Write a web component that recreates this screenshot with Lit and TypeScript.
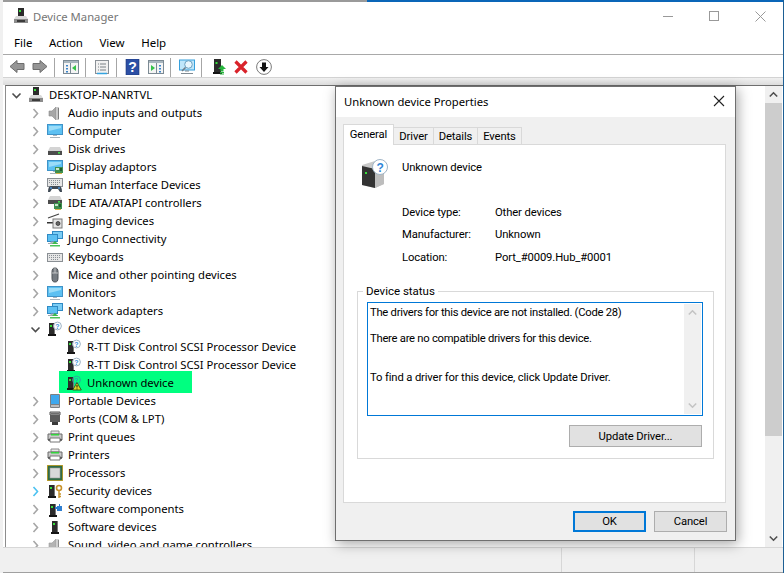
import { LitElement, html, css, svg } from "lit";
import { customElement } from "lit/decorators.js";

const tower = (x = 0, y = 0) => svg`<g transform="translate(${x} ${y})">
  <path d="M1 1h6v11H1z" fill="#2b2b2b"/><path d="M6 1h1v11H6z" fill="#777"/>
  <rect x="2" y="3" width="2" height="2" fill="#35e03a"/>
  <path d="M0 12h8v2H0z" fill="#151515"/></g>`;
const question = (x: number, y: number) => svg`<g>
  <circle cx=${x} cy=${y} r="3.9" fill="#fff" stroke="#9fb4c6" stroke-width="1"/>
  <text x=${x} y=${y + 2.6} font-size="7" font-weight="700" text-anchor="middle" fill="#3a8fdc" font-family="Liberation Sans">?</text></g>`;
const monitor = (x = 0, y = 0) => svg`<g transform="translate(${x} ${y})">
  <rect x=".5" y="1.5" width="15" height="10" fill="#5cc0f2" stroke="#3f93c8"/>
  <path d="M2 3h12v2L2 8z" fill="#9adcf8"/>
  <path d="M6 12h4v1H6zM3 14h10v1H3z" fill="#a9b4bc"/></g>`;
const board = (x: number, y: number) => svg`<g transform="translate(${x} ${y})">
  <rect width="8" height="6" fill="#3f8f4f"/><rect x="1" y="1" width="3" height="2" fill="#c8e6c9"/>
  <rect x="5" y="1" width="2" height="3" fill="#1e5c2c"/><path d="M1 6h6v1H1z" fill="#d6b24a"/></g>`;
const disk = (y = 6) => svg`<g transform="translate(1 ${y})">
  <path d="M2 0h10l2 4H0z" fill="#d4d4d4"/><path d="M0 4h14v4H0z" fill="#4c4c4c"/>
  <rect x="10" y="5" width="2" height="1.6" fill="#3fe04a"/></g>`;
const keyboard = (y = 4) => svg`<g transform="translate(0 ${y})">
  <rect x=".5" y=".5" width="15" height="8" fill="#e6e6e6" stroke="#8a8f94"/>
  <path d="M2 2.5h12M2 4.5h12M4 6.5h8" stroke="#8a9096" stroke-width="1" stroke-dasharray="1 1"/></g>`;
const printer = () => svg`
  <path d="M4 2h8v3H4z" fill="#e8e8e8" stroke="#8a8a8a"/>
  <path d="M1 5h14v6H1z" fill="#c9c9c9" stroke="#6b6b6b"/>
  <path d="M4 5h8v1.500H4z" fill="#33d43c"/>
  <path d="M3 9h10v4H3z" fill="#fff" stroke="#777"/>
  <path d="M1 11h2M13 11h2" stroke="#333"/>`;
const speaker = (op = 1) => svg`<g opacity=${op}>
  <path d="M2 6h3l4-4v13l-4-4H2z" fill="#a6a6a6" stroke="#8b8b8b" stroke-width=".6"/>
  <path d="M9 2h3v13H9z" fill="#c8c8c8"/><path d="M11 3h1v11h-1z" fill="#7c7c7c"/></g>`;
const network = () => svg`
  <rect x="5.500" y=".5" width="10" height="7" fill="#7bcdf5" stroke="#2f8ac4"/>
  <rect x=".5" y="3.500" width="10" height="7" fill="#5cc0f2" stroke="#2f8ac4"/>
  <path d="M4 11h3v1H4zM1 12.500h10" stroke="#a0a8ae" fill="none"/>
  <path d="M3 14h10v1.500H3z" fill="#4cc25a"/><path d="M8 10l3 3H5z" fill="#3dbb4b"/>`;

const ICONS: Record<string, unknown> = {
  root: svg`<path d="M5 0h6v8H5z" fill="#2b2b2b"/><rect x="6" y="2" width="2" height="2" fill="#35e03a"/>
    <path d="M3 8h10l2 3H1z" fill="#d9d9d9"/><path d="M1 11h14v4H1z" fill="#8c8c8c"/><path d="M4 12h8v2H4z" fill="#3b3b3b"/>`,
  audio: speaker(),
  computer: monitor(),
  disk: disk(),
  display: svg`${monitor()}${board(8, 8)}`,
  hid: svg`${keyboard(1)}<path d="M1 15c0-4 1-6 3-6h8c2 0 3 2 3 6h-2l-2-3H5l-2 3z" fill="#404a55"/>
    <circle cx="4" cy="11" r="1" fill="#4a90d9"/><circle cx="12" cy="11" r="1" fill="#4a90d9"/>`,
  ide: svg`${disk(1)}${board(7, 8)}`,
  imaging: svg`<path d="M1 5l11-4" stroke="#444" stroke-width="1.200"/><path d="M0 9h6v1.500H0z" fill="#333"/>
    <rect x="6" y="6" width="9" height="9" fill="#e4e4e4" stroke="#7a7a7a"/><circle cx="11" cy="10.500" r="2" fill="#666" stroke="#222" stroke-width=".7"/>`,
  jungo: network(),
  keyboard: keyboard(),
  mouse: svg`<path d="M5 5c0-3 1-4 3-4s3 1 3 4v6c0 3-1 4-3 4s-3-1-3-4z" fill="#767c82" stroke="#4d5257"/>
    <path d="M8 1v5M5 6h6" stroke="#d6d6d6" stroke-width=".8"/>`,
  monitor: monitor(),
  network: network(),
  other: svg`${tower(1, 1)}${question(10.5, 5)}`,
  child: svg`${tower(1, 1)}${question(10.5, 5)}`,
  unknown: svg`${tower(1, 1)}<circle cx="10.500" cy="5" r="3.900" fill="none" stroke="#2fa8a0"/>
    <text x="10.500" y="7.600" font-size="7" font-weight="700" text-anchor="middle" fill="#2f9fb0" font-family="Liberation Sans">?</text>
    <path d="M11 7.500l4.300 7.500h-8.600z" fill="#d9d828" stroke="#26401a" stroke-width=".8"/>
    <path d="M11 10v2.500M11 13.500v1" stroke="#111" stroke-width="1"/>`,
  portable: svg`<rect x="3" y="1" width="10" height="14" rx="1" fill="#7d8083"/><rect x="4" y="2" width="8" height="9" fill="#3ea8ee"/>
    <path d="M4 12h8v2H4z" fill="#bdbdbd"/>`,
  ports: svg`<path d="M3 1h10v3H3z" fill="#b8b8b8" stroke="#555"/><path d="M3 4h10v7H3z" fill="#5a5a5a"/>
    <path d="M5 2v1M7 2v1M9 2v1M11 2v1" stroke="#222"/><path d="M5 11h6v3H5z" fill="#3a3a3a"/>`,
  printer: printer(),
  cpu: svg`<rect x="0" y="0" width="16" height="16" fill="#c9a227"/><rect x=".8" y=".8" width="14.400" height="14.400" fill="#2f6b45"/>
    <rect x="3" y="3" width="10" height="10" fill="#d8d8d8" stroke="#9a9a9a" stroke-width=".6"/>`,
  security: svg`${tower(1, 1)}<circle cx="12" cy="5" r="2.500" fill="none" stroke="#c8922a" stroke-width="1.600"/>
    <path d="M12 7.500V15M12 11h2M12 13.500h2" stroke="#c8922a" stroke-width="1.400"/>`,
  swcomp: svg`${tower(2, 2)}<path d="M10 5h2V3h1v2h2v5h-5z" fill="#2f7fd1"/><path d="M8 6h2v2H8z" fill="#2f7fd1"/>`,
  swdev: tower(4, 1),
  sound: speaker(.85),
};

const chevron = (down: boolean, blue: boolean) => html`<svg class="chev" width="11" height="11" viewBox="0 0 11 11">
  <path d=${down ? "M1.500 3.500L5.500 7.500L9.500 3.500" : "M3.500 1L7.500 5.500L3.500 10"} fill="none"
    stroke=${blue ? "#4cc2f1" : down ? "#4d4d4d" : "#a6a6a6"} stroke-width="1.600"/></svg>`;

type Row = { t: string; i: string; l: number; c?: "r" | "d" | "b" | "n"; hl?: boolean };
const ROWS: Row[] = [
  { t: "DESKTOP-NANRTVL", i: "root", l: 0, c: "d" },
  { t: "Audio inputs and outputs", i: "audio", l: 1 },
  { t: "Computer", i: "computer", l: 1 },
  { t: "Disk drives", i: "disk", l: 1 },
  { t: "Display adaptors", i: "display", l: 1 },
  { t: "Human Interface Devices", i: "hid", l: 1 },
  { t: "IDE ATA/ATAPI controllers", i: "ide", l: 1 },
  { t: "Imaging devices", i: "imaging", l: 1 },
  { t: "Jungo Connectivity", i: "jungo", l: 1 },
  { t: "Keyboards", i: "keyboard", l: 1 },
  { t: "Mice and other pointing devices", i: "mouse", l: 1 },
  { t: "Monitors", i: "monitor", l: 1 },
  { t: "Network adapters", i: "network", l: 1 },
  { t: "Other devices", i: "other", l: 1, c: "d" },
  { t: "R-TT Disk Control SCSI Processor Device", i: "child", l: 2, c: "n" },
  { t: "R-TT Disk Control SCSI Processor Device", i: "child", l: 2, c: "n" },
  { t: "Unknown device", i: "unknown", l: 2, c: "n", hl: true },
  { t: "Portable Devices", i: "portable", l: 1 },
  { t: "Ports (COM & LPT)", i: "ports", l: 1 },
  { t: "Print queues", i: "printer", l: 1 },
  { t: "Printers", i: "printer", l: 1 },
  { t: "Processors", i: "cpu", l: 1 },
  { t: "Security devices", i: "security", l: 1, c: "b" },
  { t: "Software components", i: "swcomp", l: 1 },
  { t: "Software devices", i: "swdev", l: 1 },
  { t: "Sound, video and game controllers", i: "sound", l: 1 },
];

const TOOL_ICONS = {
  back: svg`<path d="M1 7.500L8 1.500V4.500H15V10.500H8V13.500Z" fill="#959595" stroke="#6d6d6d"/>`,
  fwd: svg`<path d="M15 7.500L8 1.500V4.500H1V10.500H8V13.500Z" fill="#959595" stroke="#6d6d6d"/>`,
  panelL: svg`<rect x=".5" y="1.500" width="15" height="13" fill="#f4f4f4" stroke="#7c8a94"/><path d="M1 2h14v2H1z" fill="#a9b6bf"/>
    <path d="M7.500 4v10" stroke="#7c8a94"/><path d="M3 6h2v1.500H3zM3 9h2v1.500H3zM3 12h2v1.500H3z" fill="#3b83c9"/><path d="M13 6v6L9 9z" fill="#35c24a"/>`,
  props: svg`<rect x="1.500" y="1.500" width="13" height="13" fill="#f1f1f1" stroke="#8a9096"/>
    <path d="M4 5h1M6 5h6M4 8h1M6 8h6M4 11h1M6 11h6" stroke="#7b8186"/><path d="M3 14.500h10" stroke="#35a4e0" stroke-width="1.500"/>`,
  help: svg`<rect x="1" y="0" width="13" height="16" fill="#2c4fa5" stroke="#1d3677" stroke-width=".6"/>
    <text x="7.500" y="13" font-size="14" font-weight="700" text-anchor="middle" fill="#fff" font-family="Liberation Sans">?</text>`,
  panelR: svg`<rect x=".5" y="1.500" width="15" height="13" fill="#f4f4f4" stroke="#7c8a94"/><path d="M1 2h14v2H1z" fill="#a9b6bf"/>
    <path d="M8.500 4v10" stroke="#7c8a94"/><path d="M3 6v6l4-3z" fill="#35c24a"/><path d="M11 6h2v1.500h-2zM11 9h2v1.500h-2zM11 12h2v1.500h-2z" fill="#3b83c9"/>`,
  scan: svg`<rect x=".5" y="1" width="15" height="10" fill="#bfe6fa" stroke="#37a0dc"/><path d="M6 12h4M2 14.500h12" stroke="#7f8a92" stroke-width="1.200"/>
    <circle cx="9.500" cy="5.500" r="3.800" fill="#e8f6fd" stroke="#6a9fc0"/><path d="M6.500 8.500L3 12" stroke="#6d7c87" stroke-width="1.600"/>`,
  devUp: svg`<g transform="translate(3 0)"><path d="M1 0h7v13H1z" fill="#2b2b2b"/><rect x="2.500" y="3" width="2" height="2" fill="#35e03a"/><path d="M0 13h9v2H0z" fill="#151515"/></g>
    <path d="M12 6l4 4h-2.500v2.500h-3V10H8z" fill="#26b53d"/><path d="M10 13.500h4M10 15h4" stroke="#26b53d"/>`,
  del: svg`<path d="M2.500 2.500L13.500 13.500M13.500 2.500L2.500 13.500" stroke="#d9232b" stroke-width="3.200"/>`,
  down: svg`<circle cx="8" cy="8" r="7.400" fill="#fff" stroke="#7a7a7a"/><path d="M6 3.500h4V8h2.500L8 13L3.500 8H6z" fill="#111"/>`,
};

const glyph = (content: unknown, size = 16, box = 16) =>
  html`<svg class="ic" width=${size} height=${size} viewBox="0 0 ${box} ${box}">${content}</svg>`;

@customElement("app-root")
export class AppRoot extends LitElement {
  static styles = css`
    :host { display: block; width: 784px; height: 573px; font-family: "Noto Sans", sans-serif; font-size: 11.25px; color: #000; }
    .win { position: relative; width: 784px; height: 573px; box-sizing: border-box; overflow: hidden; background: #fff;
      display: flex; flex-direction: column; border-left: 3px solid #f0f0f0; border-right: 1px solid #1d5f94; }
    .edge { height: 2px; flex: none; display: flex; margin-left: -3px; }
    .edge i { display: block; width: 367px; background: #9a9a9a; }
    .edge b { display: block; flex: 1; background: #0a66b8; }
    .title { height: 28px; padding-bottom: 6px; flex: none; display: flex; align-items: center; padding-left: 10px; color: #757575; font-size: 11.25px; }
    .title .name { flex: 1; margin-left: 4px; }
    .ctrl { width: 46px; height: 28px; display: flex; align-items: center; justify-content: center; }
    .menu { height: 12px; padding: 0 0 6px 11px; flex: none; display: flex; gap: 16.500px; align-items: center; border-bottom: 1px solid #a9a9a9; font-size: 11.5px; }
    .tools { height: 20px; padding: 2px 0 0 6px; flex: none; display: flex; align-items: center; gap: 7px; border-bottom: 1px solid #d3d3d3; }
    .ic { display: block; flex: none; }
    .sep { width: 1px; height: 19px; background: #a6a6a6; margin: 0 1px 0 -1px; }
    .band { height: 7px; flex: none; background: linear-gradient(#f0f0f0, #dcdcdc); }
    .main { flex: 1; min-height: 0; display: flex; margin-left: 2px; border-top: 1px solid #6e6e6e; border-left: 1px solid #8d8d8d; }
    .tree { flex: 1; min-width: 0; overflow: hidden; }
    .row { position: relative; height: 18px; display: flex; align-items: center; white-space: nowrap; }
    .row > * { position: relative; }
    .row.hl::before { content: ""; position: absolute; left: 53px; width: 133px; top: -3px; height: 22px; background: #00ff80; }
    .slot { width: 18px; height: 18px; flex: none; display: flex; align-items: center; justify-content: center; margin-right: 3px; }
    .lbl { margin: 0 0 2px 5px; }
    .vbar { width: 17px; flex: none; background: #f0f0f0; display: flex; flex-direction: column; align-items: center; margin-right: 1px; }
    .vbar .thumb { width: 17px; height: 333px; background: #cdcdcd; }
    .arrow { height: 17px; width: 17px; display: flex; align-items: center; justify-content: center; flex: none; }
    .vbar .spacer { flex: 1; }
    .status { height: 26px; flex: none; box-sizing: border-box; display: flex; background: #f0f0f0; border-top: 1px solid #d7d7d7; border-bottom: 1px solid #a0a0a0; }
    .status .cell { border-left: 1px solid #d7d7d7; }
    .status .a { flex: 1; border-left: 0; }
    .status .b { width: 132px; }
    .status .c { width: 88px; }

    .dlg { position: absolute; left: 332px; top: 86px; width: 401px; height: 455px; box-sizing: border-box; border: 1px solid #6f6f6f;
      background: #f0f0f0; box-shadow: 2px 3px 12px rgba(0,0,0,.35); display: flex; flex-direction: column;
      font-family: Roboto, sans-serif; font-size: 11.25px; letter-spacing: -.12px; }
    .dh { height: 28px; padding: 0 10px 2px 8px; flex: none; background: #fff; display: flex; align-items: center; justify-content: space-between;
      font-family: "Noto Sans", sans-serif; font-size: 11.25px; letter-spacing: 0; }
    .tabs { display: flex; align-items: flex-end; margin: 7px 0 0 7px; height: 21px; flex: none; position: relative; z-index: 1; }
    .tab { height: 18px; padding-bottom: 1px; box-sizing: border-box; border: 1px solid #d9d9d9; border-left: 0; border-bottom: 0; display: flex; align-items: center; justify-content: center; }
    .tab.on { height: 21px; background: #fff; border-left: 1px solid #d9d9d9; padding-bottom: 1px; }
    .panel { flex: none; box-sizing: border-box; width: 383px; height: 359px; margin: -1px 0 0 7px; background: #fff; border: 1px solid #d9d9d9; padding-left: 13px; }
    .head { display: flex; align-items: flex-start; gap: 14px; margin: 13px 0 0 4px; height: 30px; }
    .head span { margin-top: 3px; }
    .props { display: grid; grid-template-columns: 93px 1fr; grid-template-rows: 22px 23px 22px; align-items: center; margin: 13px 0 0 45px; height: 68px; }
    fieldset { margin: 14px 0 0 0; padding: 0 0 11px 0; border: 1px solid #d9d9d9; width: 357px; box-sizing: border-box; }
    legend { margin-left: 5px; padding: 0 3px; line-height: 16px; font-size: 11.5px; letter-spacing: 0; }
    .box { position: relative; margin: 3px 0 0 9px; width: 336px; height: 114px; box-sizing: border-box; border: 1px solid #0078d7; padding: 2px 0 0 2px; display: flex; }
    .box .txt { flex: 1; line-height: 16px; }
    .box p { margin: 0; }
    .box .l1 { letter-spacing: -.27px; }
    .box .l2 { margin-top: 10px; letter-spacing: -.26px; }
    .box .l3 { margin-top: 23px; letter-spacing: -.14px; }
    .sb { width: 17px; margin: -1px 1px 1px 0; background: #f0f0f0; display: flex; flex-direction: column; justify-content: space-between; }
    .btn { box-sizing: border-box; background: #e1e1e1; border: 1px solid #adadad; display: flex; align-items: center; justify-content: center; }
    .upd { width: 133px; height: 22px; margin: 9px 0 0 211px; }
    .foot { display: flex; justify-content: flex-end; gap: 8px; padding-right: 8px; margin-top: 8px; }
    .foot .btn { width: 73px; height: 21px; padding-bottom: 1px; }
    .foot .ok { border: 2px solid #0078d7; }
  `;

  private arrow(up: boolean, color: string) {
    return html`<div class="arrow"><svg width="9" height="7" viewBox="0 0 9 7">
      <path d=${up ? "M.8 5.500L4.500 1.800L8.200 5.500" : "M.8 1.500L4.500 5.200L8.200 1.500"} fill="none" stroke=${color} stroke-width="1.600"/></svg></div>`;
  }

  private renderRow(r: Row) {
    const c = r.c ?? "r";
    return html`<div class="row ${r.hl ? "hl" : ""}" style="padding-left:${1 + 19 * r.l}px">
      <div class="slot">${c === "n" ? "" : chevron(c === "d", c === "b")}</div>
      ${glyph(ICONS[r.i])}
      <span class="lbl">${r.t}</span>
    </div>`;
  }

  render() {
    const T = TOOL_ICONS;
    const sep = html`<div class="sep"></div>`;
    return html`<div class="win">
      <div class="edge"><i></i><b></b></div>
      <div class="title">
        <svg class="ic" width="16" height="16" viewBox="0 0 16 16">${ICONS.root}</svg>
        <span class="name">Device Manager</span>
        <div class="ctrl"><svg width="11" height="11" viewBox="0 0 11 11"><path d="M0 5.500h10" stroke="#999"/></svg></div>
        <div class="ctrl"><svg width="11" height="11" viewBox="0 0 11 11"><rect x=".5" y=".5" width="9" height="9" fill="none" stroke="#999"/></svg></div>
        <div class="ctrl"><svg width="11" height="11" viewBox="0 0 11 11"><path d="M.5.500l10 10M10.500.500l-10 10" stroke="#999"/></svg></div>
      </div>
      <div class="menu"><span>File</span><span>Action</span><span>View</span><span>Help</span></div>
      <div class="tools">
        ${glyph(T.back)}${glyph(T.fwd)}${sep}${glyph(T.panelL)}${sep}${glyph(T.props)}${sep}
        ${glyph(T.help)}${glyph(T.panelR)}${sep}${glyph(T.scan)}${sep}${glyph(T.devUp)}${glyph(T.del)}${glyph(T.down)}
      </div>
      <div class="band"></div>
      <div class="main">
        <div class="tree">${ROWS.map((r) => this.renderRow(r))}</div>
        <div class="vbar">${this.arrow(true, "#505050")}<div class="thumb"></div><div class="spacer"></div>${this.arrow(false, "#505050")}</div>
      </div>
      <div class="status"><div class="cell a"></div><div class="cell b"></div><div class="cell c"></div></div>

      <div class="dlg">
        <div class="dh"><span>Unknown device Properties</span>
          <svg width="12" height="12" viewBox="0 0 12 12"><path d="M1 1l10 10M11 1L1 11" stroke="#222" stroke-width="1.100"/></svg></div>
        <div class="tabs">
          <div class="tab on" style="width:51px">General</div>
          <div class="tab" style="width:40px">Driver</div>
          <div class="tab" style="width:44px">Details</div>
          <div class="tab" style="width:44px">Events</div>
        </div>
        <div class="panel">
          <div class="head">
            <svg class="ic" width="27" height="30" viewBox="0 0 27 30">
              <path d="M1 7l13-4 9 4v19l-9 4-13-3z" fill="#c9c9c9"/><path d="M1 8l13 3v19L1 27z" fill="#333"/>
              <path d="M14 11l9-3v18l-9 4z" fill="#bdbdbd"/><rect x="4" y="14" width="2" height="2" fill="#35e03a"/>
              <circle cx="19" cy="9" r="7.500" fill="#fff" stroke="#9fb4c6"/>
              <text x="19" y="13.500" font-size="12" font-weight="700" text-anchor="middle" fill="#2f86d8" font-family="Liberation Sans">?</text>
            </svg>
            <span>Unknown device</span>
          </div>
          <div class="props">
            <span>Device type:</span><span>Other devices</span>
            <span>Manufacturer:</span><span>Unknown</span>
            <span>Location:</span><span>Port_#0009.Hub_#0001</span>
          </div>
          <fieldset>
            <legend>Device status</legend>
            <div class="box">
              <div class="txt">
                <p class="l1">The drivers for this device are not installed. (Code 28)</p>
                <p class="l2">There are no compatible drivers for this device.</p>
                <p class="l3">To find a driver for this device, click Update Driver.</p>
              </div>
              <div class="sb">${this.arrow(true, "#c4c4c4")}${this.arrow(false, "#c4c4c4")}</div>
            </div>
            <div class="btn upd">Update Driver...</div>
          </fieldset>
        </div>
        <div class="foot"><div class="btn ok">OK</div><div class="btn">Cancel</div></div>
      </div>
    </div>`;
  }
}
